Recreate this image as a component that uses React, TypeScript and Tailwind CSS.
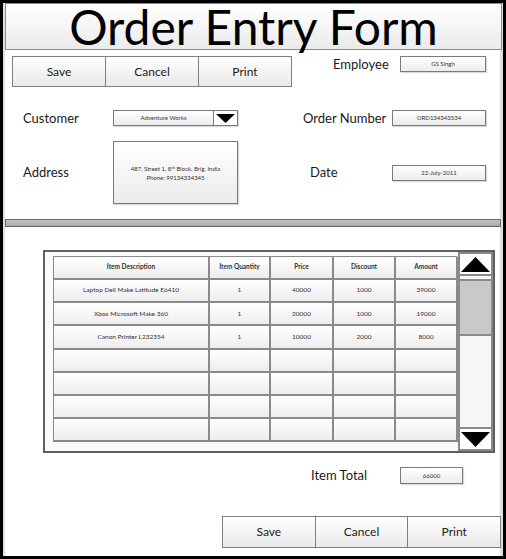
import React from "react"

const font = { fontFamily: "Lato, 'Open Sans', sans-serif" }

function Field({ text, className = "" }: { text: string; className?: string }) {
  return (
    <div
      className={`flex items-center justify-center border border-[#7a7a7a] bg-gradient-to-b from-white to-[#ececec] text-[6px] leading-none text-[#333] shadow-[1px_1px_1px_rgba(0,0,0,0.15)] ${className}`}
    >
      {text}
    </div>
  )
}

function ButtonGroup({ className = "" }: { className?: string }) {
  const labels = ["Save", "Cancel", "Print"]
  return (
    <div className={`flex border border-[#7f7f7f] bg-gradient-to-b from-white to-[#e9e9e9] ${className}`}>
      {labels.map((l, i) => (
        <div
          key={l}
          className={`flex flex-1 items-center justify-center text-[12px] leading-none text-[#222] ${
            i > 0 ? "border-l border-[#7f7f7f]" : ""
          }`}
        >
          {l}
        </div>
      ))}
    </div>
  )
}

const rows = [
  ["Laptop Dell Make Latitude E6410", "1", "40000", "1000", "39000"],
  ["Xbox Microsoft Make 360", "1", "20000", "1000", "19000"],
  ["Canon Printer L232354", "1", "10000", "2000", "8000"],
  ["", "", "", "", ""],
  ["", "", "", "", ""],
  ["", "", "", "", ""],
  ["", "", "", "", ""],
]

const headers = ["Item Description", "Item Quantity", "Price", "Discount", "Amount"]

function Grid() {
  return (
    <div className="grid h-[186px] w-[404px] grid-cols-[156px_61px_63px_62px_62px] grid-rows-8 border-l border-t border-[#8a8a8a]">
      {headers.map((h) => (
        <div
          key={h}
          className="flex items-center justify-center border-b-2 border-r-2 border-[#8a8a8a] bg-gradient-to-b from-white to-[#ededed] text-[6.5px] leading-none font-bold text-[#333]"
        >
          {h}
        </div>
      ))}
      {rows.map((r, ri) =>
        r.map((c, ci) => (
          <div
            key={`${ri}-${ci}`}
            className="flex items-center justify-center border-b-2 border-r-2 border-[#8a8a8a] bg-gradient-to-b from-white to-[#ededed] text-[6.5px] leading-none text-[#333]"
          >
            {c}
          </div>
        )),
      )}
    </div>
  )
}

function ScrollBar() {
  return (
    <div className="ml-[1px] flex h-full w-[36px] flex-col border-2 border-[#8a8a8a] bg-[#f7f7f7]">
      <div className="flex h-[22px] items-center justify-center border-b-2 border-[#8a8a8a] bg-white">
        <svg width="29" height="15" viewBox="0 0 29 15">
          <polygon points="14.5,0 29,15 0,15" fill="#000" />
        </svg>
      </div>
      <div className="mt-[3px] h-[57px] border-y-2 border-[#8a8a8a] bg-[#c9c9c9]" />
      <div className="flex-1" />
      <div className="flex h-[22px] items-center justify-center border-t-2 border-[#8a8a8a] bg-white">
        <svg width="29" height="15" viewBox="0 0 29 15">
          <polygon points="0,0 29,0 14.5,15" fill="#000" />
        </svg>
      </div>
    </div>
  )
}

const label = "text-[13px] leading-none text-[#1a1a1a]"

export default function App() {
  return (
    <div className="h-[559px] w-[506px] overflow-hidden bg-black" style={font}>
      <div className="ml-[3px] mt-[3px] h-[553px] w-[500px] border-l-2 border-r-[3px] border-[#dedede] bg-white">
        {/* title */}
        <div className="mt-[1px] flex h-[47px] w-[497px] items-center justify-center border border-[#8c8c8c] bg-gradient-to-b from-white to-[#ebebeb] text-[48px] leading-[45px] text-black">
          Order Entry Form
        </div>

        {/* buttons + employee */}
        <div className="mt-[6px] flex items-start">
          <ButtonGroup className="ml-[7px] h-[31px] w-[280px]" />
          <div className={`ml-[41px] flex h-[16px] w-[67px] items-center ${label}`}>Employee</div>
          <Field text="GS Singh" className="h-[16px] w-[86px]" />
        </div>

        {/* customer + order number */}
        <div className="mt-[23px] flex h-[16px] items-center">
          <div className={`ml-[18px] w-[90px] ${label}`}>Customer</div>
          <div className="flex h-[16px] w-[125px] border border-[#7a7a7a] bg-gradient-to-b from-white to-[#ececec] shadow-[1px_1px_1px_rgba(0,0,0,0.15)]">
            <div className="flex flex-1 items-center justify-center text-[6px] leading-none text-[#333]">
              Adventure Works
            </div>
            <div className="flex w-[24px] items-center justify-center border-l border-[#7a7a7a] bg-white">
              <svg width="19" height="9" viewBox="0 0 19 9">
                <polygon points="0,0 19,0 9.5,9" fill="#000" />
              </svg>
            </div>
          </div>
          <div className={`ml-[65px] w-[89px] ${label}`}>Order Number</div>
          <Field text="ORD134343534" className="h-[16px] w-[94px]" />
        </div>

        {/* address + date */}
        <div className="mt-[15px] flex h-[63px] items-center">
          <div className={`ml-[18px] w-[90px] ${label}`}>Address</div>
          <div className="flex h-[63px] w-[125px] flex-col items-center justify-center border border-[#7a7a7a] bg-gradient-to-b from-white to-[#ececec] text-center text-[6px] leading-[9px] text-[#333] shadow-[1px_1px_1px_rgba(0,0,0,0.15)]">
            <span>
              487, Street 1, 8<sup className="text-[4px]">th</sup> Block, Brig. India
            </span>
            <span>Phone: 99134334345</span>
          </div>
          <div className={`ml-[72px] w-[82px] ${label}`}>Date</div>
          <Field text="22-July-2011" className="h-[16px] w-[94px]" />
        </div>

        {/* separator */}
        <div className="mt-[15px] h-[8px] w-[496px] border border-[#666] bg-gradient-to-b from-[#c4c4c4] to-[#a9a9a9]" />

        {/* grid */}
        <div className="ml-[38px] mt-[23px] flex h-[203px] w-[452px] border-2 border-[#5f5f5f] bg-[#fafafa] pl-[8px]">
          <div className="pt-[4px]">
            <Grid />
          </div>
          <ScrollBar />
        </div>

        {/* item total */}
        <div className="mt-[14px] flex h-[17px] items-center">
          <div className={`ml-[306px] w-[89px] ${label}`}>Item Total</div>
          <Field text="66000" className="h-[17px] w-[63px]" />
        </div>

        {/* bottom buttons */}
        <ButtonGroup className="ml-[217px] mt-[32px] h-[32px] w-[279px]" />
      </div>
    </div>
  )
}
